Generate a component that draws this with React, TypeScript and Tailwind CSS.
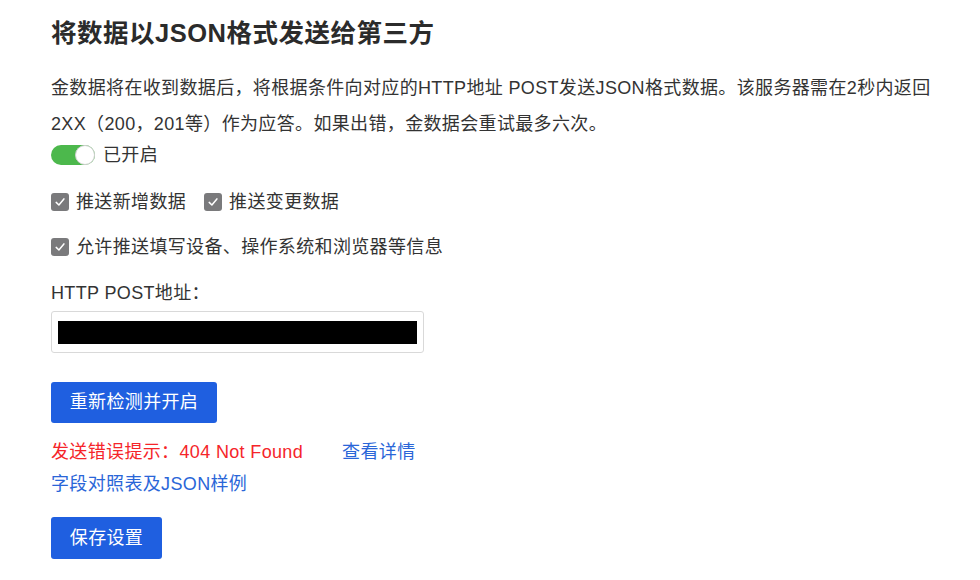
import React from "react";

function Check() {
  return (
    <span className="flex h-[18px] w-[18px] shrink-0 items-center justify-center rounded-[3px] bg-[#7a7a7c]">
      <svg width="14" height="14" viewBox="0 0 14 14" fill="none">
        <path d="M3.2 7.4 L5.9 10 L10.9 3.9" stroke="#fff" strokeWidth="1.5" strokeLinecap="round" strokeLinejoin="round" />
      </svg>
    </span>
  );
}

export default function App() {
  return (
    <div
      className="h-[580px] w-[980px] bg-white pl-[51px] text-[18px] tracking-[0.35px] text-[#333333]"
      style={{ fontFamily: '"Liberation Sans", "Noto Sans CJK SC", sans-serif' }}
    >
      <h1 className="pt-[15px] text-[25.5px] font-bold leading-[36px] tracking-[0.5px] text-[#2b2b2b]">
        将数据以JSON格式发送给第三方
      </h1>
      <p className="mt-[19px] w-[920px] leading-[36px]">
        金数据将在收到数据后，将根据条件向对应的HTTP地址 POST发送JSON格式数据。该服务器需在2秒内返回
        <br />
        2XX（200，201等）作为应答。如果出错，金数据会重试最多六次。
      </p>
      <div className="flex h-[26px] items-center gap-[8px]">
        <span className="relative flex h-[20px] w-[44px] items-center rounded-full bg-[#4cb84c]">
          <span className="absolute right-0 top-0 h-[20px] w-[20px] rounded-full border border-[#d0d0d0] bg-white" />
        </span>
        <span>已开启</span>
      </div>
      <div className="mt-[23px] flex h-[22px] items-center">
        <label className="flex items-center gap-[7px]">
          <Check />
          <span>推送新增数据</span>
        </label>
        <label className="ml-[18px] flex items-center gap-[7px]">
          <Check />
          <span>推送变更数据</span>
        </label>
      </div>
      <div className="mt-[23px] flex h-[22px] items-center gap-[7px]">
        <Check />
        <span>允许推送填写设备、操作系统和浏览器等信息</span>
      </div>
      <div className="mt-[24px] leading-[22px]">HTTP POST地址：</div>
      <div className="mt-[7px] flex h-[42px] w-[373px] items-center rounded-[3px] border border-[#d9d9d9] pl-[6px]">
        <div className="h-[23px] w-[359px] bg-black" />
      </div>
      <button className="mt-[29px] flex h-[41px] w-[166px] items-center justify-center rounded-[3px] bg-[#1f5fe0] text-white">
        重新检测并开启
      </button>
      <div className="mt-[18px] flex h-[22px] items-center">
        <span className="text-[#f5252a]">发送错误提示：404 Not Found</span>
        <span className="ml-[39px] text-[#2a66d8]">查看详情</span>
      </div>
      <div className="mt-[10px] h-[22px] leading-[22px] text-[#2a66d8]">字段对照表及JSON样例</div>
      <button className="mt-[22px] flex h-[42px] w-[111px] items-center justify-center rounded-[3px] bg-[#1f5fe0] text-white">
        保存设置
      </button>
    </div>
  );
}
